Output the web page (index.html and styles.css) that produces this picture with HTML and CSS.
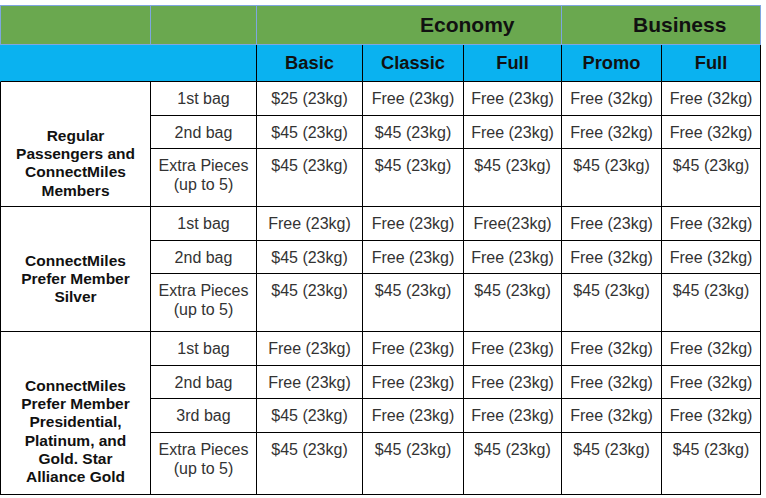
FILE: index.html
```html
<!DOCTYPE html>
<html>
<head>
<meta charset="utf-8">
<link rel="stylesheet" href="styles.css">
</head>
<body>
<div class="wrap">
<table class="bag">
  <colgroup>
    <col class="c1"><col class="c2"><col class="c3"><col class="c4"><col class="c5"><col class="c6"><col class="c7">
  </colgroup>
  <tr class="g">
    <td class="first"></td>
    <td></td>
    <td colspan="3" class="eco">Economy</td>
    <td colspan="2" class="bus">Business</td>
  </tr>
  <tr class="b">
    <th colspan="2" class="first"></th>
    <th>Basic</th>
    <th>Classic</th>
    <th>Full</th>
    <th>Promo</th>
    <th>Full</th>
  </tr>
  <tr class="r34">
    <td rowspan="3" class="grp first">Regular Passengers and ConnectMiles Members</td>
    <td>1st bag</td><td>$25 (23kg)</td><td>Free (23kg)</td><td>Free (23kg)</td><td>Free (32kg)</td><td>Free (32kg)</td>
  </tr>
  <tr class="r33">
    <td>2nd bag</td><td>$45 (23kg)</td><td>$45 (23kg)</td><td>Free (23kg)</td><td>Free (32kg)</td><td>Free (32kg)</td>
  </tr>
  <tr class="r58">
    <td>Extra Pieces<br>(up to 5)</td><td>$45 (23kg)</td><td>$45 (23kg)</td><td>$45 (23kg)</td><td>$45 (23kg)</td><td>$45 (23kg)</td>
  </tr>
  <tr class="r34">
    <td rowspan="3" class="grp first">ConnectMiles Prefer Member Silver</td>
    <td>1st bag</td><td>Free (23kg)</td><td>Free (23kg)</td><td>Free(23kg)</td><td>Free (23kg)</td><td>Free (32kg)</td>
  </tr>
  <tr class="r33">
    <td>2nd bag</td><td>$45 (23kg)</td><td>Free (23kg)</td><td>Free (23kg)</td><td>Free (32kg)</td><td>Free (32kg)</td>
  </tr>
  <tr class="r58">
    <td>Extra Pieces<br>(up to 5)</td><td>$45 (23kg)</td><td>$45 (23kg)</td><td>$45 (23kg)</td><td>$45 (23kg)</td><td>$45 (23kg)</td>
  </tr>
  <tr class="r34">
    <td rowspan="4" class="grp first">ConnectMiles Prefer Member Presidential, Platinum, and Gold. Star Alliance Gold</td>
    <td>1st bag</td><td>Free (23kg)</td><td>Free (23kg)</td><td>Free (23kg)</td><td>Free (32kg)</td><td>Free (32kg)</td>
  </tr>
  <tr class="r33">
    <td>2nd bag</td><td>Free (23kg)</td><td>Free (23kg)</td><td>Free (23kg)</td><td>Free (32kg)</td><td>Free (32kg)</td>
  </tr>
  <tr class="r34">
    <td>3rd bag</td><td>$45 (23kg)</td><td>Free (23kg)</td><td>Free (23kg)</td><td>Free (32kg)</td><td>Free (32kg)</td>
  </tr>
  <tr class="r62">
    <td>Extra Pieces<br>(up to 5)</td><td>$45 (23kg)</td><td>$45 (23kg)</td><td>$45 (23kg)</td><td>$45 (23kg)</td><td>$45 (23kg)</td>
  </tr>
</table>
</div>
</body>
</html>
```

FILE: styles.css
```css
html, body {
  margin: 0;
  padding: 0;
  background: #ffffff;
}
.wrap {
  padding-top: 5px;
}
.bag {
  border-collapse: separate;
  border-spacing: 0;
  table-layout: fixed;
  width: 761px;
  font-family: "Liberation Sans", Arial, sans-serif;
}
.c1 { width: 151px; }
.c2 { width: 106px; }
.c3 { width: 106px; }
.c4 { width: 101px; }
.c5 { width: 98px; }
.c6 { width: 100px; }
.c7 { width: 99px; }

.bag td, .bag th {
  box-sizing: border-box;
  padding: 0;
  border-right: 1px solid #000;
  border-bottom: 1px solid #000;
}
.bag .first {
  border-left: 1px solid #000;
}

/* green top row */
.g td {
  background: #6aa84f;
  border-top: 1px solid #7ea6e0;
  border-right-color: #7ea6e0;
  border-bottom-color: #7ea6e0;
  height: 40px;
  font-weight: bold;
  font-size: 21px;
  color: #111;
  text-align: left;
  vertical-align: middle;
}
.g td.first {
  border-left-color: #7ea6e0;
}
.g .eco { padding-left: 163px; }
.g .bus { padding-left: 71px; }

/* blue header row */
.b th {
  background: #0ab2f0;
  height: 37px;
  font-weight: bold;
  font-size: 18.3px;
  color: #111;
  text-align: center;
  vertical-align: middle;
}
.b th.first {
  border-left-color: #0ab2f0;
}

/* body */
.r34 td, .r33 td, .r58 td, .r62 td {
  font-size: 16px;
  line-height: 19px;
  color: #333;
  text-align: center;
  vertical-align: top;
  padding-top: 7px;
}
.r34 td { height: 34px; }
.r33 td { height: 33px; }
.r58 td { height: 58px; }
.r62 td { height: 62px; }

.bag td.grp {
  height: auto;
  font-size: 15.5px;
  font-weight: bold;
  color: #111;
  line-height: 18.2px;
  padding: 45px 8px 0 8px;
}
```
